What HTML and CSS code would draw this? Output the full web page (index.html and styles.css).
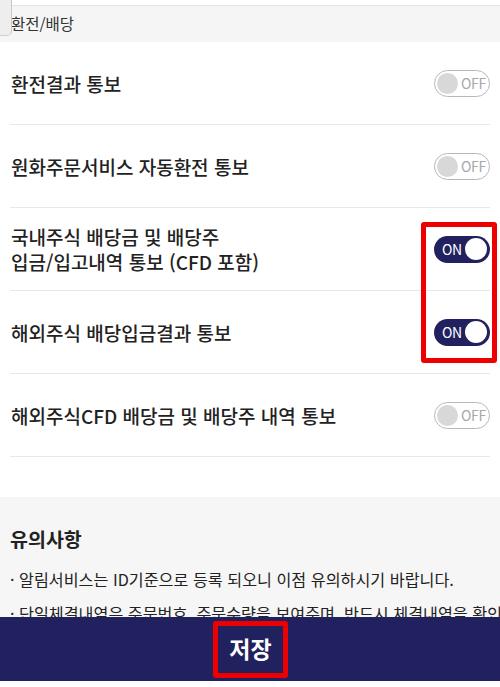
FILE: index.html
```html
<!DOCTYPE html>
<html lang="ko">
<head>
<meta charset="utf-8">
<title>알림설정</title>
<link rel="stylesheet" href="styles.css">
</head>
<body>
<div class="page">
  <div class="edge-tab"></div>
  <div class="content">
    <div class="top-gap"></div>
    <div class="section-head">환전/배당</div>
    <div class="list">
      <div class="row">
        <span class="row-label">환전결과 통보</span>
        <span class="toggle off"><span class="knob"></span><span class="tlabel">OFF</span></span>
      </div>
      <div class="row">
        <span class="row-label">원화주문서비스 자동환전 통보</span>
        <span class="toggle off"><span class="knob"></span><span class="tlabel">OFF</span></span>
      </div>
      <div class="row">
        <span class="row-label">국내주식 배당금 및 배당주<br>입금/입고내역 통보 (CFD 포함)</span>
        <span class="toggle on"><span class="tlabel">ON</span><span class="knob"></span></span>
      </div>
      <div class="row">
        <span class="row-label">해외주식 배당입금결과 통보</span>
        <span class="toggle on"><span class="tlabel">ON</span><span class="knob"></span></span>
      </div>
      <div class="row">
        <span class="row-label">해외주식CFD 배당금 및 배당주 내역 통보</span>
        <span class="toggle off"><span class="knob"></span><span class="tlabel">OFF</span></span>
      </div>
    </div>
    <div class="notice">
      <h2 class="notice-title">유의사항</h2>
      <p class="notice-item">· 알림서비스는 ID기준으로 등록 되오니 이점 유의하시기 바랍니다.</p>
      <p class="notice-item">· 단일체결내역은 주문번호, 주문수량을 보여주며, 반드시 체결내역을 확인</p>
    </div>
  </div>
  <div class="footer">
    <span class="save">저장</span>
  </div>
  <div class="bottom-strip"></div>
  <div class="highlight"></div>
</div>
</body>
</html>
```

FILE: styles.css
```css
* { box-sizing: border-box; }
html, body { margin: 0; padding: 0; background: #ffffff; }
body {
  font-family: "Noto Sans CJK KR", "Noto Sans", sans-serif;
  color: #222222;
}
.page {
  position: relative;
  width: 500px;
  height: 687px;
  display: flex;
  flex-direction: column;
  overflow: hidden;
}
.edge-tab {
  position: absolute;
  left: 0;
  top: 0;
  width: 12px;
  height: 36px;
  background: #eeeeee;
  border-right: 1px solid #c8c8c8;
  border-bottom: 1px solid #d0d0d0;
  border-bottom-right-radius: 5px;
}
.content {
  flex: 1;
  overflow: hidden;
  display: flex;
  flex-direction: column;
}
.top-gap {
  height: 6px;
  flex-shrink: 0;
  background: #ffffff;
  border-bottom: 1px solid #e4e4e4;
}
.section-head {
  height: 36px;
  flex-shrink: 0;
  background: #f5f5f5;
  padding-left: 11px;
  display: flex;
  align-items: center;
  font-size: 15.5px;
  color: #333333;
  padding-bottom: 2px;
}
.list {
  background: #ffffff;
  padding: 0 10px 40px 10px;
  flex-shrink: 0;
}
.row {
  height: 83px;
  display: flex;
  align-items: center;
  justify-content: space-between;
  border-bottom: 1px solid #e8e8e8;
}
.row-label {
  font-size: 19px;
  font-weight: 500;
  line-height: 25px;
  color: #222222;
  padding-left: 1px;
}
.toggle {
  width: 56px;
  height: 27px;
  border-radius: 14px;
  display: flex;
  align-items: center;
  flex-shrink: 0;
}
.toggle.off {
  border: 1px solid #b8b8b8;
  background: #ffffff;
  padding-left: 2px;
}
.toggle.off .knob {
  width: 21px;
  height: 21px;
  border-radius: 50%;
  background: #d8d8d8;
}
.toggle.off .tlabel {
  font-size: 14px;
  color: #a8a8a8;
  margin-left: 3px;
  letter-spacing: -0.3px;
}
.toggle.on {
  background: #22215f;
  padding: 0 3px 0 8px;
  justify-content: space-between;
}
.toggle.on .tlabel {
  font-size: 14px;
  color: #ffffff;
  letter-spacing: -0.3px;
}
.toggle.on .knob {
  width: 22px;
  height: 22px;
  border-radius: 50%;
  background: #ffffff;
}
.notice {
  flex: 1;
  background: #f6f6f6;
  padding: 28px 10px 0 10px;
}
.notice-title {
  margin: 0 0 14px 0;
  font-size: 19.5px;
  font-weight: 700;
  color: #222222;
  line-height: 28px;
}
.notice-item {
  margin: 0 0 10px 0;
  font-size: 16.2px;
  line-height: 24px;
  color: #222222;
  white-space: nowrap;
}
.footer {
  height: 64px;
  flex-shrink: 0;
  background: #22215f;
  display: flex;
  align-items: center;
  justify-content: center;
}
.save {
  display: inline-block;
  border: 5px solid #ee0000;
  border-radius: 3px;
  padding: 0 11px;
  height: 57px;
  line-height: 45px;
  font-size: 23px;
  font-weight: 700;
  color: #ffffff;
  margin-left: 1px;
}
.bottom-strip {
  height: 6px;
  flex-shrink: 0;
  background: #ffffff;
}
.highlight {
  position: absolute;
  left: 421px;
  top: 222px;
  width: 76px;
  height: 141px;
  border: 5px solid #ee0000;
  border-radius: 3px;
}
```
